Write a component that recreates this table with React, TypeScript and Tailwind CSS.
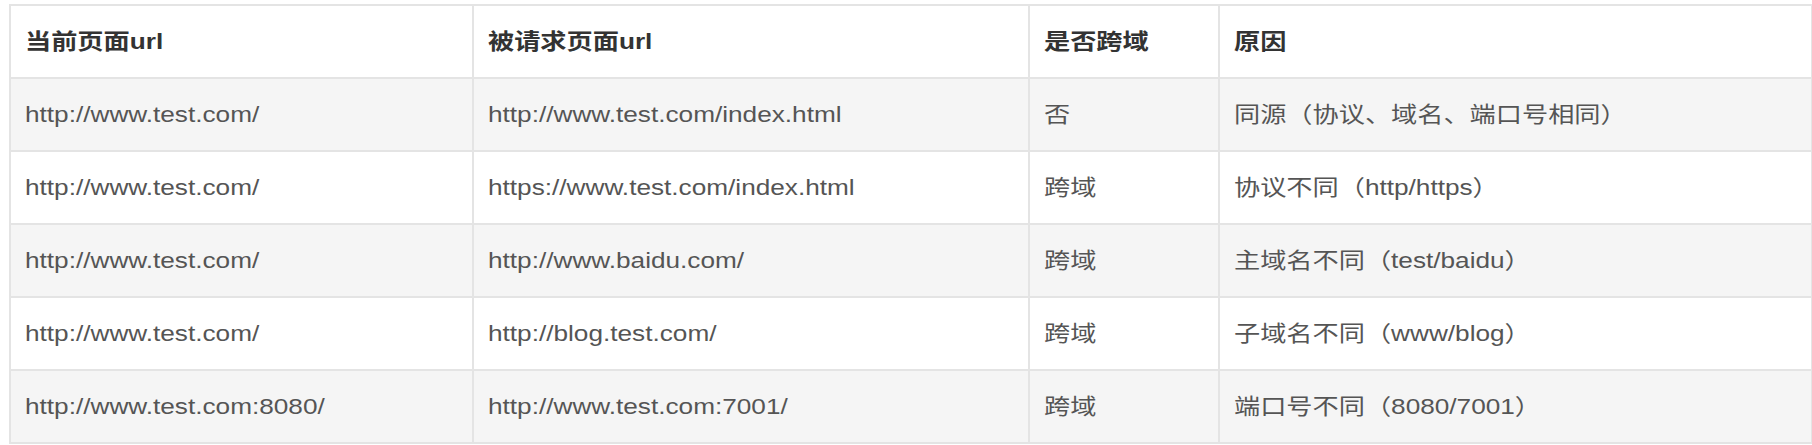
const rows = [
  ["http://www.test.com/", "http://www.test.com/index.html", "否", "同源（协议、域名、端口号相同）"],
  ["http://www.test.com/", "https://www.test.com/index.html", "跨域", "协议不同（http/https）"],
  ["http://www.test.com/", "http://www.baidu.com/", "跨域", "主域名不同（test/baidu）"],
  ["http://www.test.com/", "http://blog.test.com/", "跨域", "子域名不同（www/blog）"],
  ["http://www.test.com:8080/", "http://www.test.com:7001/", "跨域", "端口号不同（8080/7001）"],
];

const headers = ["当前页面url", "被请求页面url", "是否跨域", "原因"];

const Cell = ({ text, head }: { text: string; head?: boolean }) => (
  <td className="border-2 border-[#e4e4e4] h-[73px] pl-[14px] align-middle">
    <span
      className={`inline-block origin-left scale-x-[1.19] whitespace-nowrap ${
        head ? "font-bold text-[#333333]" : "text-[#555555]"
      }`}
    >
      {text}
    </span>
  </td>
);

export default function App() {
  return (
    <div
      className="w-[1812px] h-[445px] bg-white pt-[4px] pl-[9px] overflow-hidden"
      style={{ fontFamily: '"Liberation Sans", Arial, "Noto Sans CJK SC", sans-serif' }}
    >
      <table className="table-fixed border-collapse w-[1802px] text-[22px] leading-none">
        <colgroup>
          <col className="w-[463px]" />
          <col className="w-[556px]" />
          <col className="w-[190px]" />
          <col className="w-[593px]" />
        </colgroup>
        <thead>
          <tr className="bg-white">
            {headers.map((h) => (
              <Cell key={h} text={h} head />
            ))}
          </tr>
        </thead>
        <tbody>
          {rows.map((r, i) => (
            <tr key={i} className={i % 2 === 0 ? "bg-[#f5f5f5]" : "bg-white"}>
              {r.map((c, j) => (
                <Cell key={j} text={c} />
              ))}
            </tr>
          ))}
        </tbody>
      </table>
    </div>
  );
}
